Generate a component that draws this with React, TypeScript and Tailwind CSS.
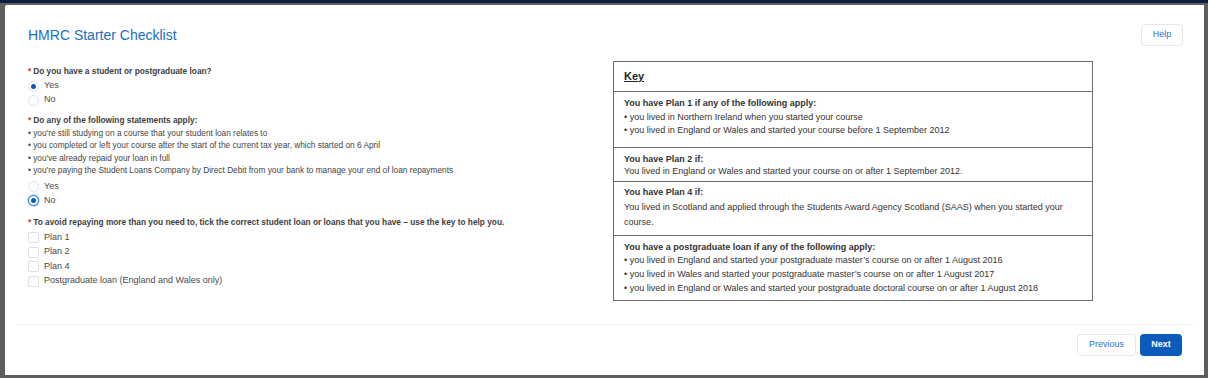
const BULLETS_Q2 = [
  "you're still studying on a course that your student loan relates to",
  'you completed or left your course after the start of the current tax year, which started on 6 April',
  "you've already repaid your loan in full",
  "you're paying the Student Loans Company by Direct Debit from your bank to manage your end of loan repayments",
];

const PLANS = ['Plan 1', 'Plan 2', 'Plan 4', 'Postgraduate loan (England and Wales only)'];

function Radio({ label, checked, focused }: { label: string; checked?: boolean; focused?: boolean }) {
  return (
    <div className="flex h-[14px] items-center gap-[5px]">
      <span
        className={
          'flex h-[11px] w-[11px] items-center justify-center rounded-full border bg-white ' +
          (focused ? 'border-[#1a73d9] shadow-[0_0_2px_#4c9be8]' : 'border-[#dfe2e6]')
        }
      >
        {checked && <span className="h-[5px] w-[5px] rounded-full bg-[#0b5cba]" />}
      </span>
      <span className="text-[9px] text-[#4a4a4a]">{label}</span>
    </div>
  );
}

function Check({ label }: { label: string }) {
  return (
    <div className="flex h-[14.5px] items-center gap-[5px]">
      <span className="h-[11px] w-[11px] rounded-[2px] border border-[#e0e0e0] bg-white" />
      <span className="text-[9px] text-[#4a4a4a]">{label}</span>
    </div>
  );
}

function Question({ children, className }: { children: string; className?: string }) {
  return (
    <div className={'flex h-[14px] items-center text-[8.3px] font-bold text-[#3e3e3c] ' + (className ?? '')}>
      <span className="mr-[2px] text-[#c23934]">*</span>
      {children}
    </div>
  );
}

function KeyRow({ title, lines, bullets, className, lh }: { title: string; lines: string[]; bullets?: boolean; className: string; lh: string }) {
  return (
    <div className={'border-t border-[#6b6b6b] px-[10px] text-[9px] text-[#333] ' + className}>
      <div className={'font-bold ' + lh}>{title}</div>
      {lines.map((l) => (
        <div key={l} className={lh}>
          {bullets ? '• ' : ''}
          {l}
        </div>
      ))}
    </div>
  );
}

export default function App() {
  return (
    <div className="h-[378px] w-[1208px] border-t-[3px] border-[#0c1e3e] bg-[#5d5e5e] pb-[3px] pl-[5px] pr-[4px] pt-[2px] font-['Liberation_Sans',Arial,sans-serif]">
      <div className="h-[370px] w-[1199px] rounded-tl-[2px] bg-white">
        <div className="flex h-[41px] items-end justify-between pl-[23px] pr-[21px]">
          <h1 className="flex h-[22px] items-center text-[14px] text-[#1b6ec2]">HMRC Starter Checklist</h1>
          <button className="h-[22px] w-[42px] rounded-[4px] border border-[#e6e6e6] bg-white text-[9px] text-[#2a74cc]">
            Help
          </button>
        </div>

        <div className="mt-[15px] flex pl-[23px]">
          <div className="w-[585px] pt-[3px]">
            <Question>Do you have a student or postgraduate loan?</Question>
            <div className="mt-[1px]">
              <Radio label="Yes" checked />
              <Radio label="No" />
            </div>
            <Question className="mt-[7.5px] !h-[12px]">Do any of the following statements apply:</Question>
            <div className="text-[8.3px] leading-[12.6px] text-[#444]">
              {BULLETS_Q2.map((b) => (
                <div key={b}>• {b}</div>
              ))}
            </div>
            <div className="mt-[3px]">
              <Radio label="Yes" />
              <Radio label="No" checked focused />
            </div>
            <Question className="mt-[7.5px]">
              To avoid repaying more than you need to, tick the correct student loan or loans that you have – use the key to help you.
            </Question>
            <div className="mt-[1px]">
              {PLANS.map((p) => (
                <Check key={p} label={p} />
              ))}
            </div>
          </div>

          <div className="h-[240px] w-[480px] border border-[#6b6b6b] border-t-0 bg-white">
            <div className="flex h-[30px] items-center border-t border-[#6b6b6b] px-[10px]">
              <span className="text-[11px] font-bold text-[#222] underline">Key</span>
            </div>
            <KeyRow
              className="h-[56px] pt-[5px]"
              lh="leading-[13.5px]"
              title="You have Plan 1 if any of the following apply:"
              bullets
              lines={[
                'you lived in Northern Ireland when you started your course',
                'you lived in England or Wales and started your course before 1 September 2012',
              ]}
            />
            <KeyRow
              className="h-[34px] pt-[5px]"
              lh="leading-[12px]"
              title="You have Plan 2 if:"
              lines={['You lived in England or Wales and started your course on or after 1 September 2012.']}
            />
            <KeyRow
              className="h-[54px] pt-[3px]"
              lh="leading-[15px]"
              title="You have Plan 4 if:"
              lines={[
                'You lived in Scotland and applied through the Students Award Agency Scotland (SAAS) when you started your course.',
              ]}
            />
            <KeyRow
              className="h-[65px] pt-[4.5px]"
              lh="leading-[13.7px]"
              title="You have a postgraduate loan if any of the following apply:"
              bullets
              lines={[
                "you lived in England and started your postgraduate master’s course on or after 1 August 2016",
                "you lived in Wales and started your postgraduate master’s course on or after 1 August 2017",
                'you lived in England or Wales and started your postgraduate doctoral course on or after 1 August 2018',
              ]}
            />
          </div>
        </div>

        <div className="mx-[11px] mt-[23px] h-px bg-[#efefef]" />

        <div className="mt-[9px] flex justify-end gap-[4px] pr-[22px]">
          <button className="h-[22px] w-[59px] rounded-[4px] border border-[#e6e6e6] bg-white text-[9px] text-[#2a74cc]">
            Previous
          </button>
          <button className="h-[22px] w-[42px] rounded-[4px] bg-[#0b5cba] text-[9px] font-bold text-white">
            Next
          </button>
        </div>
      </div>
    </div>
  );
}
